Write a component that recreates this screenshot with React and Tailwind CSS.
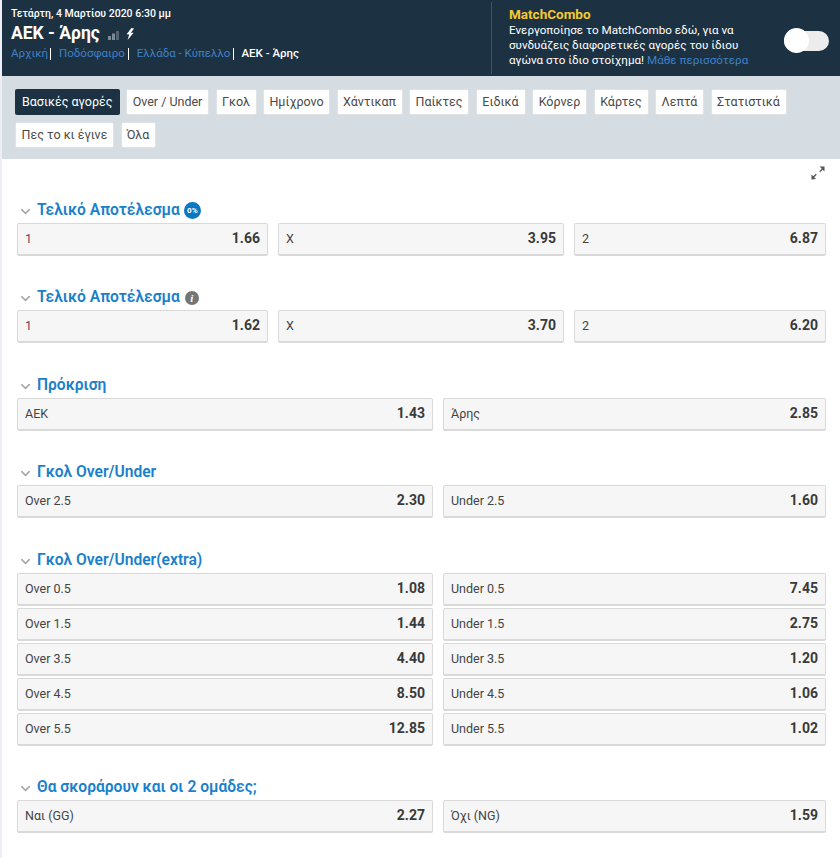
import React from "react";
import { ChevronDown } from "lucide-react";

const tabs = [
    { name: "Over / Under", w: "w-[83px]" },
    { name: "Γκολ", w: "w-[41px]" },
    { name: "Ημίχρονο", w: "w-[67px]" },
    { name: "Χάντικαπ", w: "w-[66px]" },
    { name: "Παίκτες", w: "w-[60px]" },
    { name: "Ειδικά", w: "w-[50px]" },
    { name: "Κόρνερ", w: "w-[55px]" },
    { name: "Κάρτες", w: "w-[55px]" },
    { name: "Λεπτά", w: "w-[49px]" },
    { name: "Στατιστικά", w: "w-[76px]" },
    { name: "Πες το κι έγινε", w: "w-[99px]" },
    { name: "Όλα", w: "w-[35px]" },
];

const sections = [
    { title: "Τελικό Αποτέλεσμα", badge: "zero", cols: 3, rows: [[["1", "1.66"], ["X", "3.95"], ["2", "6.87"]]] },
    { title: "Τελικό Αποτέλεσμα", badge: "info", cols: 3, rows: [[["1", "1.62"], ["X", "3.70"], ["2", "6.20"]]] },
    { title: "Πρόκριση", cols: 2, rows: [[["ΑΕΚ", "1.43"], ["Άρης", "2.85"]]] },
    { title: "Γκολ Over/Under", cols: 2, rows: [[["Over 2.5", "2.30"], ["Under 2.5", "1.60"]]] },
    {
        title: "Γκολ Over/Under(extra)",
        cols: 2,
        rows: [
            [["Over 0.5", "1.08"], ["Under 0.5", "7.45"]],
            [["Over 1.5", "1.44"], ["Under 1.5", "2.75"]],
            [["Over 3.5", "4.40"], ["Under 3.5", "1.20"]],
            [["Over 4.5", "8.50"], ["Under 4.5", "1.06"]],
            [["Over 5.5", "12.85"], ["Under 5.5", "1.02"]],
        ],
    },
    { title: "Θα σκοράρουν και οι 2 ομάδες;", cols: 2, rows: [[["Ναι (GG)", "2.27"], ["Όχι (NG)", "1.59"]]] },
];

function Odd({ label, value }) {
    return (
        <div className="flex items-center justify-between h-[33px] pl-[7px] pr-[7px] bg-[#f6f6f6] border border-[#d9d9d9] border-b-2 rounded-[2px]">
            <span className={`text-[12.5px] pt-px ${label === "1" ? "text-[#7a3b55]" : "text-[#444]"}`}>{label}</span>
            <span className="text-[14px] font-bold text-[#3a3a3a] pb-px">{value}</span>
        </div>
    );
}

function Section({ title, badge, cols, rows }) {
    return (
        <section className="mb-[29.5px]">
            <div className="flex items-center h-[22px] mb-[3px] pl-[1px] pt-[4px]">
                <ChevronDown size={15} strokeWidth={2.5} className="text-[#a8a8a8] mr-[4px] mt-px" />
                <h2 className="text-[15.6px] font-semibold text-[#1a80cb] leading-none whitespace-nowrap">{title}</h2>
                {badge === "zero" && (
                    <span className="ml-[4px] flex items-center justify-center w-[17px] h-[17px] rounded-full bg-[#0a78c2] text-white text-[8px] font-bold">0%</span>
                )}
                {badge === "info" && (
                    <span className="ml-[5px] flex items-center justify-center w-[14px] h-[14px] rounded-full bg-[#757575] text-white text-[11px] font-bold italic font-['Liberation_Serif',serif]">i</span>
                )}
            </div>
            <div className="flex flex-col gap-[2px]">
                {rows.map((row, i) => (
                    <div key={i} className={`grid gap-[10px] ${cols === 3 ? "grid-cols-[251px_286px_252px]" : "grid-cols-[416px_383px]"}`}>
                        {row.map(([label, value]) => (
                            <Odd key={label} label={label} value={value} />
                        ))}
                    </div>
                ))}
            </div>
        </section>
    );
}

export default function App() {
    return (
        <div className="w-[840px] h-[858px] overflow-hidden bg-white border-l-2 border-[#eeeef6] font-['Roboto',sans-serif]">
            <header className="flex h-[76px] bg-[#1c3242] text-white">
                <div className="w-[489px] pl-[9px] pt-[7px]">
                    <div className="text-[10.5px] font-medium leading-[13px]">Τετάρτη, 4 Μαρτίου 2020 6:30 μμ</div>
                    <div className="flex items-center h-[22px] mt-[3px]">
                        <h1 className="text-[17.5px] font-bold leading-none">ΑΕΚ - Άρης</h1>
                        <svg width="11" height="9" viewBox="0 0 11 9" className="ml-[8px] mt-0.5">
                            <rect x="0" y="5" width="3" height="4" fill="#7d8a94" />
                            <rect x="4" y="2.5" width="3" height="6.5" fill="#7d8a94" />
                            <rect x="8" y="0" width="3" height="9" fill="#54636f" />
                        </svg>
                        <svg width="8" height="12" viewBox="0 0 8 12" className="ml-[7px]" fill="#fff">
                            <path d="M5.4 0 .6 6.2l2.6.2L1.6 12 7.6 4.8l-2.7-.1L8 .6z" />
                        </svg>
                    </div>
                    <nav className="flex items-center text-[11.5px] leading-[15px] mt-[1px]">
                        <a className="text-[#3f80c6]">Αρχική</a>
                        <span className="mx-[2px] w-px h-[12px] bg-white" />
                        <a className="ml-[6px] text-[#3f80c6]">Ποδόσφαιρο</a>
                        <span className="mx-[3px] w-px h-[12px] bg-white" />
                        <a className="ml-[5px] text-[#3f80c6]">Ελλάδα - Κύπελλο</a>
                        <span className="mx-[3px] w-px h-[12px] bg-white" />
                        <span className="ml-[4px] font-medium">ΑΕΚ - Άρης</span>
                    </nav>
                </div>
                <div className="flex-1 my-[2px] border-l border-[#41535f] pl-[17px] flex">
                    <div className="w-[250px] pt-[4px]">
                        <div className="text-[13.5px] font-bold text-[#f5c92e] leading-[16px]">MatchCombo</div>
                        <p className="text-[11.65px] leading-[15px] mt-[1px]">
                            Ενεργοποίησε το MatchCombo εδώ, για να συνδυάζεις διαφορετικές αγορές του ίδιου αγώνα στο ίδιο στοίχημα! <a className="text-[#3f80c6]">Μάθε περισσότερα</a>
                        </p>
                    </div>
                    <div className="relative ml-[25px] mt-[29px] w-[45px] h-[20px] rounded-full bg-[#ececec]">
                        <span className="absolute left-0 -top-[3px] w-[25px] h-[25px] rounded-full bg-white" />
                    </div>
                </div>
            </header>

            <div className="h-[83px] bg-[#d5dce2] px-[13px] pt-[13px]">
                <div className="flex flex-wrap gap-x-[6.5px] gap-y-[7px]">
                    <button className="w-[104.5px] h-[26px] bg-[#1c3242] text-white text-[12.5px] rounded-[2px] whitespace-nowrap">Βασικές αγορές</button>
                    {tabs.map((tab) => (
                        <button key={tab.name} className={`${tab.w} h-[26px] bg-white text-[#4a4a4a] text-[12.5px] rounded-[2px] border border-[#dfe3e6] whitespace-nowrap`}>{tab.name}</button>
                    ))}
                </div>
            </div>

            <main className="pl-[15px] pt-[6px]">
                <div className="flex justify-end pr-[15px] h-[28px]">
                    <svg width="14" height="14" viewBox="0 0 14 14" className="mt-[1px]" fill="#555">
                        <path d="M13.5 .5v5l-1.8-1.8-2.5 2.5-.9-.9 2.5-2.5L8.5.5z" />
                        <path d="M.5 13.5v-5l1.8 1.8 2.5-2.5.9.9-2.5 2.5 1.8 1.8z" />
                    </svg>
                </div>
                <div className="pt-[4.75px]">
                    {sections.map((s, i) => (
                        <Section key={i} {...s} />
                    ))}
                </div>
            </main>
        </div>
    );
}
